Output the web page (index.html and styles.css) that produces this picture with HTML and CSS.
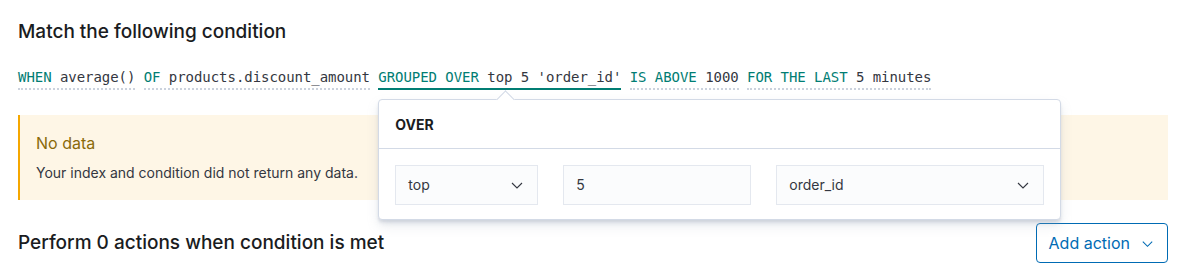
FILE: index.html
```html
<!DOCTYPE html>
<html>
<head>
    <title>Alert condition</title>
    <link rel="stylesheet" href="styles.css">
</head>
<body>
    <div class="rule-panel">
        <h3 class="section-title">Match the following condition</h3>

        <div class="expression-row">
            <span class="expression"><span class="kw">WHEN</span> average()</span>
            <span class="expression"><span class="kw">OF</span> products.discount_amount</span>
            <span class="expression-wrap">
                <span class="expression active"><span class="kw">GROUPED OVER</span> top 5 'order_id'</span>
                <div class="popover">
                    <div class="popover-arrow"></div>
                    <div class="popover-title">OVER</div>
                    <div class="popover-body">
                        <div class="field select-field field-type">
                            <span>top</span>
                            <svg class="chevron" viewBox="0 0 16 16"><path d="M3 6l5 5 5-5"/></svg>
                        </div>
                        <div class="field field-size"><span>5</span></div>
                        <div class="field select-field field-term">
                            <span>order_id</span>
                            <svg class="chevron" viewBox="0 0 16 16"><path d="M3 6l5 5 5-5"/></svg>
                        </div>
                    </div>
                </div>
            </span>
            <span class="expression"><span class="kw">IS ABOVE</span> 1000</span>
            <span class="expression"><span class="kw">FOR THE LAST</span> 5 minutes</span>
        </div>

        <div class="callout">
            <div class="callout-title">No data</div>
            <p class="callout-text">Your index and condition did not return any data.</p>
        </div>

        <div class="actions-row">
            <h3 class="section-title">Perform 0 actions when condition is met</h3>
            <button class="add-action">
                Add action
                <svg class="chevron" viewBox="0 0 16 16"><path d="M3 6l5 5 5-5"/></svg>
            </button>
        </div>
    </div>
</body>
</html>
```

FILE: styles.css
```css
body {
    margin: 0;
    background: #ffffff;
    font-family: 'Inter', 'Noto Sans', sans-serif;
    color: #343741;
}

.rule-panel {
    padding: 18px 15px 0 18px;
}

.section-title {
    margin: 0;
    font-size: 19px;
    font-weight: 500;
    line-height: 28px;
    color: #1a1c21;
}

.expression-row {
    margin-top: 21px;
    font-family: 'DejaVu Sans Mono', 'Liberation Mono', monospace;
    font-size: 14px;
    letter-spacing: -0.05px;
    line-height: 20px;
    color: #343741;
    white-space: nowrap;
}

.expression {
    display: inline-block;
    padding-bottom: 1px;
    border-bottom: 2px dotted #cbd2dd;
}

.expression.active {
    border-bottom: 2px solid #017d73;
}

.kw {
    color: #017d73;
}

.expression-wrap {
    position: relative;
    display: inline-block;
}

.popover {
    position: absolute;
    top: 32px;
    left: 0;
    width: 681px;
    background: #ffffff;
    border: 1px solid #d3dae6;
    border-radius: 4px;
    box-shadow: 0 6px 12px -1px rgba(152, 162, 179, 0.25), 0 4px 4px -1px rgba(152, 162, 179, 0.2), 0 2px 2px 0 rgba(152, 162, 179, 0.15);
    font-family: 'Inter', 'Noto Sans', sans-serif;
    letter-spacing: 0;
    z-index: 2;
}

.popover-arrow {
    position: absolute;
    top: -7px;
    left: 120px;
    width: 12px;
    height: 12px;
    background: #ffffff;
    border-top: 1px solid #d3dae6;
    border-left: 1px solid #d3dae6;
    transform: rotate(45deg);
}

.popover-title {
    padding: 16px 16px 14px;
    font-size: 14px;
    font-weight: 700;
    line-height: 18px;
    color: #1a1c21;
    border-bottom: 1px solid #d3dae6;
}

.popover-body {
    display: flex;
    gap: 25px;
    padding: 16px 16px 14px;
}

.field {
    display: flex;
    align-items: center;
    justify-content: space-between;
    box-sizing: border-box;
    height: 40px;
    padding: 0 12px;
    background: #fbfcfd;
    border: 1px solid #e4e8ef;
    font-size: 14px;
    color: #343741;
}

.field-type {
    width: 143px;
}

.field-size {
    width: 188px;
}

.field-term {
    width: 268px;
}

.chevron {
    width: 16px;
    height: 16px;
    fill: none;
    stroke: #343741;
    stroke-width: 1.1;
}

.callout {
    margin-top: 25px;
    padding: 16px 16px 17px;
    background: #fef6e6;
    border-left: 2px solid #f5a700;
}

.callout-title {
    font-size: 16px;
    line-height: 24px;
    color: #8a6a0a;
}

.callout-text {
    margin: 8px 0 0;
    font-size: 14px;
    line-height: 20px;
    color: #343741;
}

.actions-row {
    display: flex;
    align-items: center;
    justify-content: space-between;
    margin-top: 23px;
}

.add-action {
    display: flex;
    align-items: center;
    gap: 10px;
    height: 40px;
    padding: 0 12px;
    background: #ffffff;
    border: 1px solid #006bb4;
    border-radius: 4px;
    font-family: 'Inter', 'Noto Sans', sans-serif;
    font-size: 16px;
    color: #006bb4;
    cursor: pointer;
}

.add-action .chevron {
    stroke: #006bb4;
    width: 15px;
    height: 15px;
}
```
